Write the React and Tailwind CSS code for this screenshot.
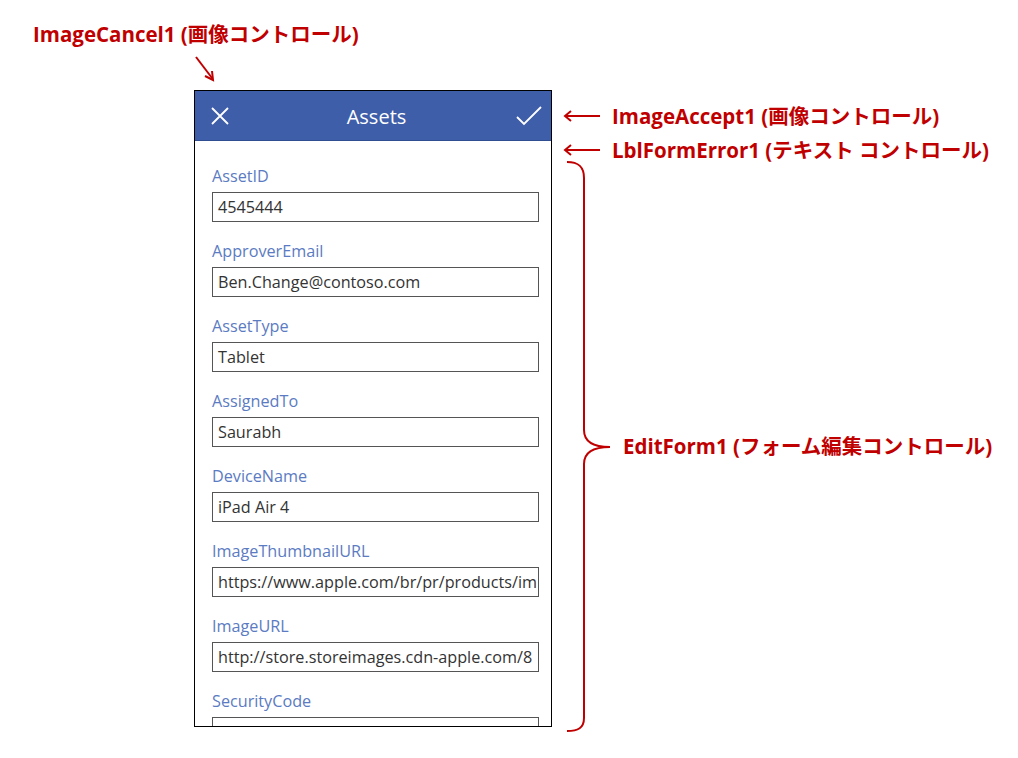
const fields = [
  { label: "AssetID", value: "4545444" },
  { label: "ApproverEmail", value: "Ben.Change@contoso.com" },
  { label: "AssetType", value: "Tablet" },
  { label: "AssignedTo", value: "Saurabh" },
  { label: "DeviceName", value: "iPad Air 4" },
  { label: "ImageThumbnailURL", value: "https://www.apple.com/br/pr/products/im" },
  { label: "ImageURL", value: "http://store.storeimages.cdn-apple.com/8" },
  { label: "SecurityCode", value: "" },
];

const callout = "font-bold text-[#c00000] text-[20.5px] leading-none whitespace-nowrap";
const calloutFont = { fontFamily: '"Open Sans", "Noto Sans CJK JP", sans-serif' };

function LeftArrow() {
  return (
    <svg width="40" height="12" viewBox="0 0 40 12" className="shrink-0">
      <path d="M2 6H37" stroke="#c00000" strokeWidth="2" />
      <path d="M8 1L2 6L8 11" stroke="#c00000" strokeWidth="2" fill="none" />
    </svg>
  );
}

function Field({ label, value }) {
  return (
    <div className="flex flex-col">
      <div className="text-[16.2px] leading-[22px] text-[#5b7bc2]">{label}</div>
      <div className="mt-[5px] h-[30px] w-[327px] border border-[#555] flex items-center px-[5px] overflow-hidden">
        <span className="text-[16.2px] text-[#333] whitespace-nowrap">{value}</span>
      </div>
    </div>
  );
}

export default function App() {
  return (
    <div
      className="relative w-[1018px] h-[758px] bg-white overflow-hidden"
      style={{ fontFamily: '"Open Sans", sans-serif' }}
    >
      {/* phone frame */}
      <div className="ml-[194px] pt-[90px]">
        <div className="w-[358px] h-[637px] border border-black flex flex-col overflow-hidden">
          <div className="h-[50px] shrink-0 bg-[#3e5ea9] flex items-center justify-between pl-[16px] pr-[9px] border-b border-[#2f4d91]">
            <svg width="18" height="18" viewBox="0 0 18 18">
              <path d="M1 1L17 17M17 1L1 17" stroke="white" strokeWidth="1.8" />
            </svg>
            <div className="text-white text-[20px] ml-[8px] pt-[3px]">Assets</div>
            <svg width="26" height="20" viewBox="0 0 26 20">
              <path d="M1 11L8 18L25 1" stroke="white" strokeWidth="1.8" fill="none" />
            </svg>
          </div>
          <div className="pl-[17px] pt-[24px] flex flex-col gap-[18px]">
            {fields.map((f) => (
              <Field key={f.label} {...f} />
            ))}
          </div>
        </div>
      </div>

      {/* callouts */}
      <div className={`absolute left-[33px] top-[24px] ${callout}`} style={calloutFont}>
        ImageCancel1 (画像コントロール)
      </div>
      <svg className="absolute left-[192px] top-[54px]" width="26" height="30" viewBox="0 0 26 30">
        <path d="M4 3L20 24" stroke="#c00000" strokeWidth="2" />
        <path d="M13 22L21 26L20 17" stroke="#c00000" strokeWidth="2" fill="none" />
      </svg>

      <div className="absolute left-[563px] top-[106px] flex items-center gap-[9px]">
        <LeftArrow />
        <span className={callout} style={calloutFont}>ImageAccept1 (画像コントロール)</span>
      </div>
      <div className="absolute left-[563px] top-[140px] flex items-center gap-[9px]">
        <LeftArrow />
        <span className={callout} style={calloutFont}>LblFormError1 (テキスト コントロール)</span>
      </div>

      <svg className="absolute left-[560px] top-[158px]" width="60" height="580" viewBox="0 0 60 580">
        <path
          d="M7 4C18 4 24 8 24 20V272C24 282 30 289 50 289C30 289 24 296 24 306V560C24 570 18 573 7 573"
          stroke="#c00000"
          strokeWidth="2"
          fill="none"
        />
      </svg>
      <div className={`absolute left-[623px] top-[436px] ${callout}`} style={calloutFont}>
        EditForm1 (フォーム編集コントロール)
      </div>
    </div>
  );
}
